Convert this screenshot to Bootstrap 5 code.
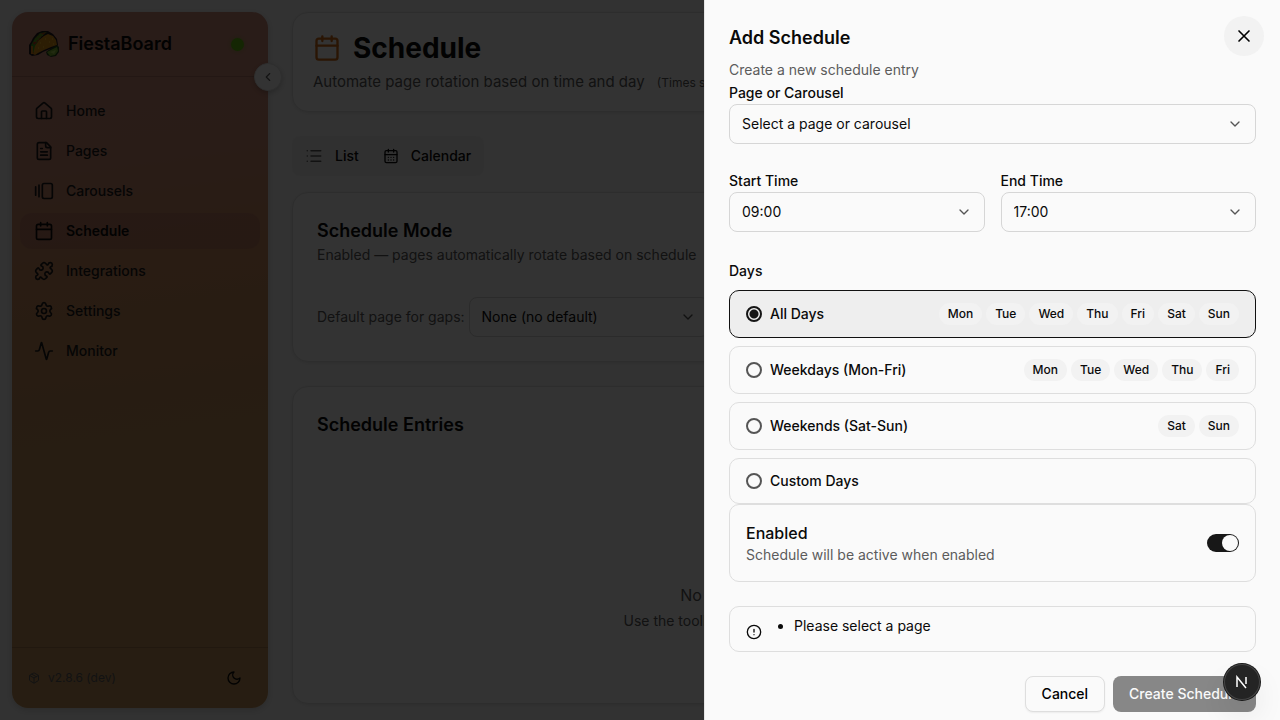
<!DOCTYPE html>
<html lang="en">
<head>
<meta charset="utf-8">
<meta name="viewport" content="width=device-width, initial-scale=1">
<title>FiestaBoard – Schedule</title>
<link href="https://cdn.jsdelivr.net/npm/bootstrap@5.3.0/dist/css/bootstrap.min.css" rel="stylesheet">
<style>
:root { --ink: #0a0a0a; --soft: #5c5c5c; --line: #dedede; --surface: #fafafa; }
body { font-family: Inter, "Liberation Sans", sans-serif; font-size: 14px; line-height: 20px; color: var(--ink); background: #f8f8f8; height: 100vh; overflow: hidden; }
.ico { fill: none; stroke: currentColor; stroke-width: 2; stroke-linecap: round; stroke-linejoin: round; flex: none; }
.soft { color: var(--soft); }
.t12 { font-size: 12px; line-height: 16px; }
.t15 { font-size: 15px; line-height: 22px; }
.t16 { font-size: 16px; line-height: 24px; }
.t18 { font-size: 18px; line-height: 28px; }

/* sidebar */
.shell { height: 100vh; padding: 12px; gap: 24px; }
.side { width: 256px; border-radius: 16px; flex: none; position: relative; box-shadow: 0 2px 6px rgba(0,0,0,.15);
  background: linear-gradient(172deg, #cc8c7a 0%, #cc8a76 20%, #cb8a5e 38%, #c18f5a 60%, #c1925a 100%); }
.side-head { height: 65px; padding: 0 24px 0 16px; border-bottom: 1px solid rgba(0,0,0,.15); }
.brand { font-size: 18px; line-height: 28px; font-weight: 600; }
.online { width: 13px; height: 13px; border-radius: 50%; background: #64bc10; box-shadow: 0 0 4px rgba(100,188,16,.5); }
.collapse-btn { position: absolute; right: -14px; top: 51px; width: 28px; height: 28px; border-radius: 50%; border: 1px solid #e4e4e4; background: #fff; box-shadow: 0 2px 5px rgba(0,0,0,.2); padding: 0; }
.side-nav { padding: 16px 8px; gap: 4px; }
.side-nav .nav-link { height: 36px; padding: 0 14px; gap: 12px; border-radius: 12px; color: #1b1b1b; font-weight: 500; }
.side-nav .nav-link.active { background: rgba(140,80,90,.18); color: var(--ink); font-weight: 600; }
.side-foot { height: 61px; padding: 0 26px 0 16px; border-top: 1px solid rgba(0,0,0,.15); }
.bare { border: 0; background: none; padding: 0; color: inherit; }

/* page */
.page-main { min-width: 0; padding-bottom: 4px; }
.panel { border: 1px solid #e2e2e2; border-radius: 16px; background: #fcfcfc; box-shadow: 0 1px 3px rgba(0,0,0,.08); }
.head-panel { height: 100px; padding: 16px 20px; }
.head-ico { color: #d06a15; }
.title-main { font-size: 28px; line-height: 38px; font-weight: 700; }
.tabs { height: 40px; padding: 0 13px; gap: 24px; border-radius: 8px; background: #f1f1f1; align-self: flex-start; }
.pick { height: 40px; border: 1px solid #d6d6d6; border-radius: 8px; background-color: transparent; font-size: 14px; line-height: 20px; color: var(--ink); padding: 0 36px 0 12px;
  background-image: url("data:image/svg+xml,%3Csvg xmlns='http://www.w3.org/2000/svg' viewBox='0 0 24 24' fill='none' stroke='%23555' stroke-width='2' stroke-linecap='round' stroke-linejoin='round'%3E%3Cpath d='m6 9 6 6 6-6'/%3E%3C/svg%3E"); background-size: 16px 16px; background-position: right 12px center; }
.pick-wide { width: 240px; }

/* drawer */
.shade { background: #000; opacity: .8; position: fixed; inset: 0; z-index: 1040; }
.drawer.offcanvas { width: 45%; background: var(--surface); border-left: 1px solid #e6e6e6; padding: 24px; color: var(--ink); }
.drawer:focus { outline: 0; }
.close-btn { position: absolute; right: 16px; top: 16px; width: 40px; height: 40px; border-radius: 50%; border: 0; background: #f2f2f2; padding: 0; }
.field-label { font-weight: 500; line-height: 18px; margin-bottom: 2px; display: block; }
.group-label { font-size: 14px; font-weight: 500; line-height: 14px; margin-bottom: 12px; }
.choice { border: 1px solid var(--line); border-radius: 10px; padding: 12px 16px; gap: 8px; font-weight: 500; line-height: 20px; }
.choice.picked { background: #eee; border-color: #111; }
.choice input { appearance: none; width: 16px; height: 16px; margin: 0; border: 2px solid #555; border-radius: 50%; flex: none; }
.choice input:checked { border-color: #151515; background: radial-gradient(circle, #151515 4px, transparent 5px); }
.day { font-size: 12px; line-height: 16px; padding: 3px 9px; border-radius: 11px; background: #f2f2f2; }
.box { border: 1px solid var(--line); border-radius: 10px; }
.notice { padding: 9px 16px 11px; }
.toggle.form-check-input { width: 32px; height: 18px; margin: 0; border: 0; background-color: #171717; background-size: 18px 18px; }
.toggle.form-check-input:checked { background-color: #171717; background-image: url("data:image/svg+xml,%3Csvg xmlns='http://www.w3.org/2000/svg' viewBox='-9 -9 18 18'%3E%3Ccircle r='8' fill='%23fafafa'/%3E%3C/svg%3E"); }
.act { height: 36px; border-radius: 8px; font-size: 14px; line-height: 20px; font-weight: 500; padding: 0 16px; }
.act-plain { border: 1px solid var(--line); background: var(--surface); box-shadow: 0 1px 2px rgba(0,0,0,.06); }
.act-main { border: 0; background: #171717; color: #fafafa; opacity: .5; }
.dev { position: fixed; right: 20px; bottom: 20px; z-index: 1060; width: 36px; height: 36px; border: 0; border-radius: 50%; padding: 0; background: #242424; box-shadow: 0 0 0 1px #171717, inset 0 0 0 1px #454545, 0 16px 32px -8px rgba(0,0,0,.24); }
</style>
</head>
<body>
<div class="shell d-flex">
  <aside class="side d-flex flex-column">
    <div class="side-head d-flex align-items-center">
      <svg width="32" height="28" viewBox="0 0 32 28" class="me-2" aria-hidden="true">
        <path d="M1 24V15L3 12L5 8L9 3L14 1H20L25 4L29 9L30 15L28 18L22 19L15 22L10 25L4 26Z" fill="#251b22"/>
        <path d="M3 23V15L7 8L12 3L19 2L13 7L9 13L7 20L5 23Z" fill="#3f9a1c"/>
        <path d="M5 13L8 8L12 4L18 2L13 7L9 12L6 15Z" fill="#bd3a1d"/>
        <path d="M6 11h2v-2h2V7h2V5h3" fill="none" stroke="#56ae23" stroke-width="1.5"/>
        <path d="M3 16H5V24H3Z" fill="#d98016"/>
        <path d="M5 24L7 16L11 10L16 6L20 4L25 6L28 10L29 15L23 17L16 20L10 23L7 25Z" fill="#dc9018"/>
        <path d="M12 13h1M17 9h1M21 12h1M15 17h1M24 9h1M10 18h1M25 14h1" stroke="#f2b92d" stroke-width="1.5"/>
        <path d="M18 22L22 19L29 15L31 17V22L28 26L23 27L19 25Z" fill="#25461c"/>
        <path d="M19 22L29 17L30 21L27 25L22 26Z" fill="#7db62e"/>
        <path d="M22 22l6-2-2 4z" fill="#abd454"/>
      </svg>
      <span class="brand flex-grow-1">FiestaBoard</span>
      <span class="online" role="status" aria-label="Online"></span>
    </div>
    <button class="collapse-btn d-flex align-items-center justify-content-center" type="button" aria-label="Collapse sidebar"><svg class="ico soft" width="14" height="14" viewBox="0 0 24 24"><path d="m15 18-6-6 6-6"/></svg></button>
    <nav class="side-nav nav flex-column flex-nowrap flex-grow-1">
      <a class="nav-link d-flex align-items-center" href="#"><svg class="ico" width="20" height="20" viewBox="0 0 24 24"><path d="M15 21v-8a1 1 0 0 0-1-1h-4a1 1 0 0 0-1 1v8"/><path d="M3 10a2 2 0 0 1 .709-1.528l7-5.999a2 2 0 0 1 2.582 0l7 5.999A2 2 0 0 1 21 10v9a2 2 0 0 1-2 2H5a2 2 0 0 1-2-2z"/></svg>Home</a>
      <a class="nav-link d-flex align-items-center" href="#"><svg class="ico" width="20" height="20" viewBox="0 0 24 24"><path d="M15 2H6a2 2 0 0 0-2 2v16a2 2 0 0 0 2 2h12a2 2 0 0 0 2-2V7Z"/><path d="M14 2v4a2 2 0 0 0 2 2h4M10 9H8M16 13H8M16 17H8"/></svg>Pages</a>
      <a class="nav-link d-flex align-items-center" href="#"><svg class="ico" width="20" height="20" viewBox="0 0 24 24"><path d="M2 7v10M6 5v14"/><rect width="12" height="18" x="10" y="3" rx="2"/></svg>Carousels</a>
      <a class="nav-link active d-flex align-items-center" href="#" aria-current="page"><svg class="ico" width="20" height="20" viewBox="0 0 24 24"><path d="M8 2v4M16 2v4M3 10h18"/><rect width="18" height="18" x="3" y="4" rx="2"/></svg>Schedule</a>
      <a class="nav-link d-flex align-items-center" href="#"><svg class="ico" width="20" height="20" viewBox="0 0 24 24"><path d="M15.39 4.39a1 1 0 0 0 1.68-.474 2.5 2.5 0 1 1 3.014 3.015 1 1 0 0 0-.474 1.68l1.683 1.682a2.414 2.414 0 0 1 0 3.414L19.61 15.39a1 1 0 0 1-1.68-.474 2.5 2.5 0 1 0-3.014 3.015 1 1 0 0 1 .474 1.68l-1.683 1.682a2.414 2.414 0 0 1-3.414 0L8.61 19.61a1 1 0 0 0-1.68.474 2.5 2.5 0 1 1-3.014-3.015 1 1 0 0 0 .474-1.68l-1.683-1.682a2.414 2.414 0 0 1 0-3.414L4.39 8.61a1 1 0 0 1 1.68.474 2.5 2.5 0 1 0 3.014-3.015 1 1 0 0 1-.474-1.68l1.683-1.682a2.414 2.414 0 0 1 3.414 0z"/></svg>Integrations</a>
      <a class="nav-link d-flex align-items-center" href="#"><svg class="ico" width="20" height="20" viewBox="0 0 24 24"><path d="M9.671 4.136a2.34 2.34 0 0 1 4.659 0 2.34 2.34 0 0 0 3.319 1.915 2.34 2.34 0 0 1 2.33 4.033 2.34 2.34 0 0 0 0 3.831 2.34 2.34 0 0 1-2.33 4.033 2.34 2.34 0 0 0-3.319 1.915 2.34 2.34 0 0 1-4.659 0 2.34 2.34 0 0 0-3.32-1.915 2.34 2.34 0 0 1-2.33-4.033 2.34 2.34 0 0 0 0-3.831A2.34 2.34 0 0 1 6.35 6.051a2.34 2.34 0 0 0 3.319-1.915"/><circle cx="12" cy="12" r="3"/></svg>Settings</a>
      <a class="nav-link d-flex align-items-center" href="#"><svg class="ico" width="20" height="20" viewBox="0 0 24 24"><path d="M22 12h-2.480a2 2 0 0 0-1.930 1.460l-2.350 8.360a.25.25 0 0 1-.48 0L9.240 2.180a.25.25 0 0 0-.48 0l-2.350 8.360A2 2 0 0 1 4.490 12H2"/></svg>Monitor</a>
    </nav>
    <div class="side-foot d-flex align-items-center">
      <svg class="ico soft me-2" width="12" height="12" viewBox="0 0 24 24"><path d="M11 21.730a2 2 0 0 0 2 0l7-4A2 2 0 0 0 21 16V8a2 2 0 0 0-1-1.730l-7-4a2 2 0 0 0-2 0l-7 4A2 2 0 0 0 3 8v8a2 2 0 0 0 1 1.730zM12 22V12M3.290 7 12 12l8.710-5M7.500 4.270l9 5.150"/></svg>
      <span class="t12 soft flex-grow-1">v2.8.6 (dev)</span>
      <button class="bare d-flex" type="button" aria-label="Toggle theme"><svg class="ico" width="16" height="16" viewBox="0 0 24 24"><path d="M12 3a6 6 0 0 0 9 9 9 9 0 1 1-9-9Z"/></svg></button>
    </div>
  </aside>

  <main class="page-main flex-grow-1 d-flex flex-column">
    <header class="panel head-panel mb-4">
      <div class="d-flex align-items-center gap-2 mb-1">
        <svg class="ico head-ico me-1" width="28" height="28" viewBox="0 0 24 24"><path d="M8 2v4M16 2v4M3 10h18"/><rect width="18" height="18" x="3" y="4" rx="2"/></svg>
        <h1 class="title-main mb-0">Schedule</h1>
      </div>
      <p class="t15 soft mb-0 text-nowrap">Automate page rotation based on time and day <span class="t12 ms-2">(Times shown in local time)</span></p>
    </header>
    <div class="tabs d-flex align-items-center mb-3">
      <button class="bare d-flex align-items-center fw-medium" type="button"><svg class="ico soft me-2" width="18" height="18" viewBox="0 0 24 24"><path d="M3 5h.01M3 12h.01M3 19h.01M8 5h13M8 12h13M8 19h13"/></svg><span class="ms-1">List</span></button>
      <button class="bare d-flex align-items-center fw-medium" type="button"><svg class="ico me-2" width="16" height="16" viewBox="0 0 24 24"><path d="M8 2v4M16 2v4M3 10h18M8 14h.01M12 14h.01M16 14h.01M8 18h.01M12 18h.01M16 18h.01"/><rect width="18" height="18" x="3" y="4" rx="2"/></svg><span class="ms-1">Calendar</span></button>
    </div>
    <section class="panel p-4 mb-4">
      <h2 class="t18 fw-semibold mb-0">Schedule Mode</h2>
      <p class="soft mb-0">Enabled — pages automatically rotate based on schedule</p>
      <div class="d-flex align-items-center gap-1 mt-4 pt-2">
        <label class="soft" for="gap-page">Default page for gaps:</label>
        <select class="form-select pick pick-wide" id="gap-page"><option>None (no default)</option></select>
      </div>
    </section>
    <section class="panel p-4 flex-grow-1 d-flex flex-column">
      <h2 class="t18 fw-semibold mb-0">Schedule Entries</h2>
      <div class="flex-grow-1 d-flex flex-column justify-content-end align-items-center text-center soft pb-5">
        <p class="t16 mb-1">No schedule entries found</p>
        <p class="mb-0">Use the toolbar above to create your first entry.</p>
      </div>
    </section>
  </main>
</div>

<div class="shade"></div>

<div class="offcanvas offcanvas-end show drawer" data-bs-backdrop="false" role="dialog" tabindex="-1" aria-labelledby="drawer-title">
  <h2 class="t18 fw-semibold mb-2" id="drawer-title">Add Schedule</h2>
  <button class="close-btn d-flex align-items-center justify-content-center" type="button" data-bs-dismiss="offcanvas" aria-label="Close"><svg class="ico" width="20" height="20" viewBox="0 0 24 24"><path d="M18 6 6 18M6 6l12 12"/></svg></button>
  <p class="soft mb-1">Create a new schedule entry</p>
  <form>
    <label class="field-label" for="page">Page or Carousel</label>
    <select class="form-select pick" id="page"><option>Select a page or carousel</option></select>
    <div class="row gx-3 my-4 pt-1 pb-2">
      <div class="col-6"><label class="field-label" for="start">Start Time</label><select class="form-select pick" id="start"><option>09:00</option></select></div>
      <div class="col-6"><label class="field-label" for="end">End Time</label><select class="form-select pick" id="end"><option>17:00</option></select></div>
    </div>
    <fieldset>
      <legend class="group-label">Days</legend>
      <div class="d-flex flex-column gap-2">
        <label class="choice picked d-flex align-items-center"><input type="radio" name="days" checked><span class="flex-grow-1">All Days</span><span class="d-flex gap-1"><span class="day">Mon</span><span class="day">Tue</span><span class="day">Wed</span><span class="day">Thu</span><span class="day">Fri</span><span class="day">Sat</span><span class="day">Sun</span></span></label>
        <label class="choice d-flex align-items-center"><input type="radio" name="days"><span class="flex-grow-1">Weekdays (Mon-Fri)</span><span class="d-flex gap-1"><span class="day">Mon</span><span class="day">Tue</span><span class="day">Wed</span><span class="day">Thu</span><span class="day">Fri</span></span></label>
        <label class="choice d-flex align-items-center"><input type="radio" name="days"><span class="flex-grow-1">Weekends (Sat-Sun)</span><span class="d-flex gap-1"><span class="day">Sat</span><span class="day">Sun</span></span></label>
        <label class="choice d-flex align-items-center"><input type="radio" name="days"><span>Custom Days</span></label>
      </div>
    </fieldset>
    <div class="box d-flex align-items-center justify-content-between p-3 mb-4">
      <div><label class="t16 fw-medium d-block" for="on">Enabled</label><span class="soft">Schedule will be active when enabled</span></div>
      <div class="form-switch p-0 d-flex"><input class="form-check-input toggle" type="checkbox" role="switch" id="on" checked></div>
    </div>
    <div class="box notice d-flex mb-4" role="alert">
      <svg class="ico mt-2" width="16" height="16" viewBox="0 0 24 24"><circle cx="12" cy="12" r="10"/><path d="M12 8v4M12 16h.01"/></svg>
      <ul class="mb-0"><li>Please select a page</li></ul>
    </div>
    <div class="d-flex justify-content-end gap-2">
      <button class="act act-plain" type="button">Cancel</button>
      <button class="act act-main" type="submit" disabled>Create Schedule</button>
    </div>
  </form>
</div>

<button class="dev d-flex align-items-center justify-content-center" type="button" aria-label="Developer tools"><svg width="14" height="14" viewBox="0 0 14 14" fill="none" stroke="#fff" stroke-width="1.500"><path d="M2 12V2L11 13M11 2v7"/></svg></button>
<script src="https://cdn.jsdelivr.net/npm/bootstrap@5.3.0/dist/js/bootstrap.bundle.min.js"></script>
</body>
</html>
